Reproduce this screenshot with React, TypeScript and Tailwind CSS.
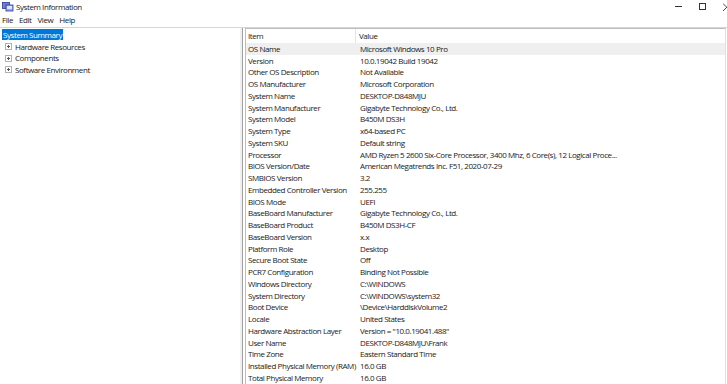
import React from "react";

const rows: [string, string][] = [
  ["OS Name", "Microsoft Windows 10 Pro"],
  ["Version", "10.0.19042 Build 19042"],
  ["Other OS Description", "Not Available"],
  ["OS Manufacturer", "Microsoft Corporation"],
  ["System Name", "DESKTOP-D848MJU"],
  ["System Manufacturer", "Gigabyte Technology Co., Ltd."],
  ["System Model", "B450M DS3H"],
  ["System Type", "x64-based PC"],
  ["System SKU", "Default string"],
  ["Processor", "AMD Ryzen 5 2600 Six-Core Processor, 3400 Mhz, 6 Core(s), 12 Logical Proce..."],
  ["BIOS Version/Date", "American Megatrends Inc. F51, 2020-07-29"],
  ["SMBIOS Version", "3.2"],
  ["Embedded Controller Version", "255.255"],
  ["BIOS Mode", "UEFI"],
  ["BaseBoard Manufacturer", "Gigabyte Technology Co., Ltd."],
  ["BaseBoard Product", "B450M DS3H-CF"],
  ["BaseBoard Version", "x.x"],
  ["Platform Role", "Desktop"],
  ["Secure Boot State", "Off"],
  ["PCR7 Configuration", "Binding Not Possible"],
  ["Windows Directory", "C:\\WINDOWS"],
  ["System Directory", "C:\\WINDOWS\\system32"],
  ["Boot Device", "\\Device\\HarddiskVolume2"],
  ["Locale", "United States"],
  ["Hardware Abstraction Layer", 'Version = "10.0.19041.488"'],
  ["User Name", "DESKTOP-D848MJU\\Frank"],
  ["Time Zone", "Eastern Standard Time"],
  ["Installed Physical Memory (RAM)", "16.0 GB"],
  ["Total Physical Memory", "16.0 GB"],
];

function AppIcon() {
  return (
    <svg viewBox="0 0 12 10" className="h-[10px] w-[12px]" aria-hidden>
      <rect x="0.5" y="0.5" width="7" height="6" fill="#6b7fd8" stroke="#2c3a8c" strokeWidth="0.8" />
      <rect x="4" y="3" width="7" height="6" fill="#9aa8ec" stroke="#2c3a8c" strokeWidth="0.8" />
      <rect x="5" y="4" width="5" height="3" fill="#dfe5ff" />
    </svg>
  );
}

function Expander() {
  return (
    <svg viewBox="0 0 7 7" className="h-[7px] w-[7px]" aria-hidden>
      <rect x="0.5" y="0.5" width="6" height="6" fill="white" stroke="#b0b0b0" strokeWidth="1" />
      <path d="M2 3.5h3M3.5 2v3" stroke="#555" strokeWidth="1" />
    </svg>
  );
}

export default function App() {
  return (
    <div
      className="flex h-[384px] w-[727px] flex-col overflow-hidden bg-white text-[8px] tracking-[-0.42px] text-[#1a1a1a]"
      style={{ fontFamily: '"Open Sans", "Noto Sans", sans-serif' }}
    >
      {/* title bar */}
      <div className="flex h-[13px] items-center">
        <div className="flex items-center gap-[2px] pl-[2px] pt-[1px]">
          <AppIcon />
          <span>System Information</span>
        </div>
        <div className="ml-auto flex items-center gap-[17px]">
          <span className="block h-[1px] w-[7px] bg-[#333]" />
          <span className="block h-[7px] w-[7px] border border-[#333]" />
          <svg viewBox="0 0 4 8" className="h-[8px] w-[4px]" aria-hidden>
            <path d="M0 0.5L4 4.5M0 8L4 4" stroke="#333" strokeWidth="0.9" />
          </svg>
        </div>
      </div>

      {/* menu bar */}
      <div className="flex h-[14px] items-center gap-[6px] pl-[2px]">
        <span>File</span>
        <span>Edit</span>
        <span>View</span>
        <span>Help</span>
      </div>

      <div className="h-[1px] bg-[#d6d6d6]" />

      {/* panes */}
      <div className="flex min-h-0 flex-1">
        {/* tree */}
        <div className="w-[240px] shrink-0 pt-[1px]">
          <div className="ml-[2px] inline-block bg-[#0078d7] px-[1px] leading-[11px] text-white">
            System Summary
          </div>
          {["Hardware Resources", "Components", "Software Environment"].map((t) => (
            <div key={t} className="flex h-[11.5px] items-center gap-[3px] pl-[5px]">
              <Expander />
              <span>{t}</span>
            </div>
          ))}
        </div>

        <div className="w-[2px] shrink-0 bg-[#f0f0f0]" />

        {/* list */}
        <div className="flex min-w-0 flex-1 flex-col border-l border-[#a0a0a0] pl-[2px] pr-[1px]">
          <div className="flex min-h-0 flex-1 flex-col border-l border-[#bdbdbd] border-r border-r-[#e0e0e0] border-t border-t-[#bdbdbd]">
            <div className="flex h-[14px] shrink-0 items-center">
              <div className="w-[110px] shrink-0 border-r border-[#e5e5e5] pl-[2px] leading-[14px]">Item</div>
              <div className="pl-[3px]">Value</div>
            </div>
            {rows.map(([k, v], i) => (
              <div
                key={k}
                className={`flex h-[11.75px] shrink-0 items-center whitespace-nowrap ${i === 0 ? "bg-[#efefef]" : ""}`}
              >
                <div className="w-[110px] shrink-0 pl-[2px]">{k}</div>
                <div className="pl-[4px]">{v}</div>
              </div>
            ))}
          </div>
        </div>
      </div>
    </div>
  );
}
